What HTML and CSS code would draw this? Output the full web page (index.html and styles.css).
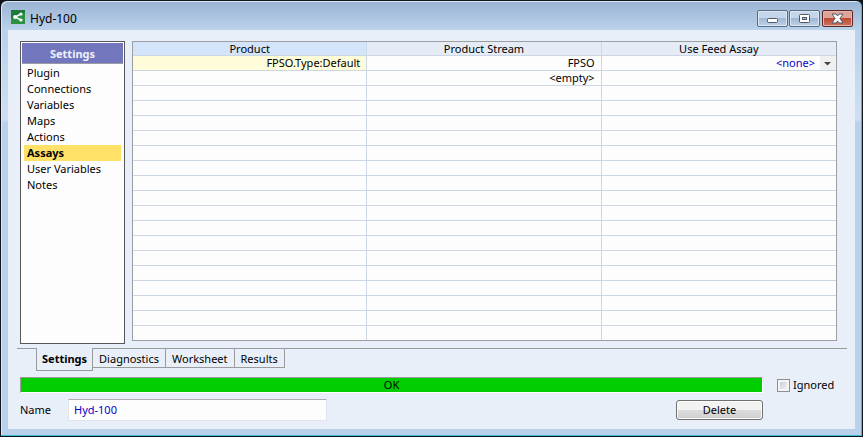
FILE: index.html
```html
<!DOCTYPE html>
<html lang="en">
<head>
<meta charset="utf-8">
<title>Hyd-100</title>
<link rel="stylesheet" href="styles.css">
</head>
<body>
<div class="window">
  <header class="titlebar">
    <svg class="app-icon" width="14" height="14" viewBox="0 0 14 14" aria-hidden="true">
      <rect width="14" height="14" fill="#1d7a38"/>
      <path d="M0 14V9L14 3V14Z" fill="#2c9140"/>
      <path d="M10 4L4 7L10 10" fill="none" stroke="#fff" stroke-width="1.4"/>
      <circle cx="4" cy="7" r="1.9" fill="#fff"/>
      <circle cx="10" cy="4" r="1.6" fill="#fff"/>
      <circle cx="10" cy="10" r="1.6" fill="#fff"/>
    </svg>
    <h1 class="title">Hyd-100</h1>
    <div class="window-buttons">
      <button class="window-button" type="button" aria-label="Minimize">
        <svg width="11" height="9" viewBox="0 0 11 9"><rect x=".5" y="4.500" width="10" height="4" rx="1" fill="#fff" stroke="#535766"/></svg>
      </button>
      <button class="window-button" type="button" aria-label="Maximize">
        <svg width="11" height="9" viewBox="0 0 11 9"><rect x=".5" y=".5" width="10" height="8" rx="1" fill="#fff" stroke="#535766"/><rect x="3.500" y="3.500" width="4" height="2" fill="#a9bfd8" stroke="#535766"/></svg>
      </button>
      <button class="window-button close" type="button" aria-label="Close">
        <svg width="13" height="11" viewBox="0 0 13 11"><path d="M1 1H5L6.500 3L8 1H12L9 5.500L12 10H8L6.500 8L5 10H1L4 5.500Z" fill="#fff" stroke="#535766"/></svg>
      </button>
    </div>
  </header>
  <main class="client">
    <div class="panes">
      <nav class="sidebar">
        <h2 class="sidebar-title">Settings</h2>
        <ul class="menu">
          <li><a href="#plugin">Plugin</a></li>
          <li><a href="#connections">Connections</a></li>
          <li><a href="#variables">Variables</a></li>
          <li><a href="#maps">Maps</a></li>
          <li><a href="#actions">Actions</a></li>
          <li><a class="current" href="#assays">Assays</a></li>
          <li><a href="#user-variables">User Variables</a></li>
          <li><a href="#notes">Notes</a></li>
        </ul>
      </nav>
      <div class="grid-pane">
        <table class="grid">
          <thead>
            <tr><th class="selected" scope="col">Product</th><th scope="col">Product Stream</th><th scope="col">Use Feed Assay</th></tr>
          </thead>
          <tbody>
            <tr>
              <td class="active">FPSO.Type:Default</td>
              <td>FPSO</td>
              <td class="assay"><div class="combo"><select class="assay-select" aria-label="Use Feed Assay"><option>&lt;none&gt;</option></select><svg class="arrow" width="16" height="14" viewBox="0 0 16 14" aria-hidden="true"><rect width="16" height="14" fill="#f0f0f0"/><path d="M4 6H11L7.500 9.500Z" fill="#444"/></svg></div></td>
            </tr>
            <tr><td></td><td>&lt;empty&gt;</td><td></td></tr>
            <tr><td></td><td></td><td></td></tr>
            <tr><td></td><td></td><td></td></tr>
            <tr><td></td><td></td><td></td></tr>
            <tr><td></td><td></td><td></td></tr>
            <tr><td></td><td></td><td></td></tr>
            <tr><td></td><td></td><td></td></tr>
            <tr><td></td><td></td><td></td></tr>
            <tr><td></td><td></td><td></td></tr>
            <tr><td></td><td></td><td></td></tr>
            <tr><td></td><td></td><td></td></tr>
            <tr><td></td><td></td><td></td></tr>
            <tr><td></td><td></td><td></td></tr>
            <tr><td></td><td></td><td></td></tr>
            <tr><td></td><td></td><td></td></tr>
            <tr><td></td><td></td><td></td></tr>
            <tr><td></td><td></td><td></td></tr>
            <tr><td></td><td></td><td></td></tr>
          </tbody>
        </table>
      </div>
    </div>
    <div class="tabs" role="tablist">
      <button class="tab active-tab" type="button" role="tab" aria-selected="true">Settings</button>
      <button class="tab" type="button" role="tab" aria-selected="false">Diagnostics</button>
      <button class="tab" type="button" role="tab" aria-selected="false">Worksheet</button>
      <button class="tab" type="button" role="tab" aria-selected="false">Results</button>
    </div>
    <div class="footer">
      <div class="status" role="status">OK</div>
      <div class="ignored">
        <input class="check" type="checkbox" id="ignored">
        <label for="ignored">Ignored</label>
      </div>
      <div class="name-row">
        <label class="name-label" for="name">Name</label>
        <input class="name-input" type="text" id="name" value="Hyd-100">
        <button class="delete" type="button">Delete</button>
      </div>
    </div>
  </main>
</div>
</body>
</html>
```

FILE: styles.css
```css
* { box-sizing: border-box; }

body {
  margin: 0;
  background: #10151c;
  color: #000;
  font: 11px/16px "Noto Sans", "Open Sans", sans-serif;
}

button, input, select {
  margin: 0;
  font: inherit;
  color: inherit;
}

h1, h2, ul { margin: 0; padding: 0; }

.window {
  display: flex;
  flex-direction: column;
  min-height: 100vh;
  padding: 1px 6px 6px;
  border: 1px solid #10151c;
  border-radius: 7px 7px 0 0;
  background: linear-gradient(#9ab3d2, #b9d1ea 28px, #cfdff0 118px, #b9d1ea 122px);
  box-shadow: inset -1px -1px #37bfd6, inset 1px 1px #dce9f6;
}

.titlebar {
  display: flex;
  align-items: center;
  height: 28px;
  padding: 0 3px 0 4px;
}

.app-icon { margin-top: 2px; }

.title {
  flex: 1;
  margin-left: 5px;
  padding-top: 5px;
  font-size: 12px;
  font-weight: 400;
}

.window-buttons {
  display: flex;
  gap: 1px;
  padding-top: 5px;
}

.window-button {
  display: flex;
  align-items: center;
  justify-content: center;
  width: 31px;
  height: 17px;
  padding: 0;
  border: 1px solid #586b82;
  border-radius: 2px;
  background: linear-gradient(#c5d6ea 50%, #a0b9d4 50%, #bed2e8);
  box-shadow: inset 0 0 0 1px #dce8f5;
}

.close {
  margin-left: 1px;
  border-color: #5b2527;
  background: linear-gradient(#dca59a 45%, #bd4a35 50%, #c87461);
  box-shadow: inset 0 0 0 1px #e5b5aa;
}

.client {
  flex: 1;
  margin: 0 1px 1px;
  padding: 11px 8px 8px;
  background: #e8eff9;
}

.panes {
  display: flex;
  gap: 7px;
  padding: 0 10px 0 4px;
}

.sidebar {
  flex: none;
  width: 105px;
  padding: 1px;
  border: 1px solid #58585a;
  background: #fdfdfd;
}

.sidebar-title {
  height: 21px;
  border-bottom: 1px solid #9b9ba5;
  background: #7277bd;
  color: #edf0ff;
  font-size: 11px;
  line-height: 22px;
  text-align: center;
}

.menu {
  padding: 1px 2px;
  list-style: none;
}

.menu a {
  display: block;
  padding-left: 3px;
  color: #000;
  text-decoration: none;
}

.menu .current {
  background: #ffe168;
  font-weight: 700;
}

.grid-pane {
  flex: 1;
  min-width: 0;
  margin-bottom: 3px;
  border: 1px solid #9c9ea2;
  background: #fdfdfd;
}

.grid {
  width: 100%;
  border-collapse: separate;
  border-spacing: 0;
  table-layout: fixed;
  line-height: 14px;
}

.grid th {
  height: 14px;
  padding: 0;
  border-right: 1px solid #cdd6e4;
  border-bottom: 1px solid #cdd6e4;
  background: #e5ecf6;
  font-weight: 400;
  line-height: 13px;
}

.grid .selected { background: #d4e4fb; }

.grid td {
  height: 15px;
  padding: 0 6px;
  border-right: 1px solid #cdd6e4;
  border-bottom: 1px solid #cdd6e4;
  text-align: right;
}

.grid th:last-child, .grid td:last-child { border-right: 0; }
.grid tbody tr:last-child td { height: 14px; border-bottom: 0; }
.grid .active { background: #fffcda; }
.grid .assay { padding: 0; }

.combo { display: flex; }

.assay-select {
  flex: 1;
  height: 14px;
  padding: 0 5px 0 0;
  border: 0;
  appearance: none;
  background: transparent;
  color: #0b00c8;
  line-height: 14px;
  text-align-last: right;
}

.arrow { flex: none; }

.tabs {
  display: flex;
  align-items: flex-start;
  height: 23px;
  margin: 4px 0 0 1px;
  padding-left: 19px;
  border-top: 1px solid #9b9b9b;
}

.tab {
  height: 19px;
  padding: 0 6px;
  border: 1px solid #9b9b9b;
  border-width: 0 1px 1px 0;
  background: transparent;
  line-height: 20px;
}

.active-tab {
  height: 23px;
  margin-top: -1px;
  padding: 0 5px;
  border-width: 0 1px 1px;
  background: #e8eff9;
  font-weight: 700;
  line-height: 22px;
}

.footer {
  display: grid;
  grid-template-columns: 1fr 58px;
  gap: 6px 14px;
  margin-top: 6px;
  padding: 0 12px 0 4px;
}

.status {
  height: 16px;
  border: 1px solid #9b9b9b;
  border-right-color: #fff;
  border-bottom-color: #fff;
  background: #00ce00;
  line-height: 14px;
  text-align: center;
}

.ignored {
  display: flex;
  align-items: center;
  gap: 3px;
  white-space: nowrap;
}

.check {
  flex: none;
  width: 13px;
  height: 13px;
  border: 1px solid #8b8f94;
  appearance: none;
  background: linear-gradient(135deg, #c0c7d2, #f8f9fa);
  box-shadow: inset 0 0 0 2px #f4f4f4;
}

.name-row {
  display: flex;
  align-items: center;
}

.name-label { width: 48px; }

.name-input {
  width: 259px;
  height: 22px;
  padding: 0 5px 2px;
  border: 1px solid #dfe5ee;
  border-top-color: #abadb3;
  background: #fdfdfd;
  color: #0b00c8;
}

.delete {
  width: 87px;
  height: 20px;
  margin-left: auto;
  padding: 0;
  border: 1px solid #707070;
  border-radius: 3px;
  background: linear-gradient(#f2f2f2 50%, #dcdcdc 50%, #cfcfcf);
  box-shadow: inset 0 0 0 1px #fafafa;
}
```
